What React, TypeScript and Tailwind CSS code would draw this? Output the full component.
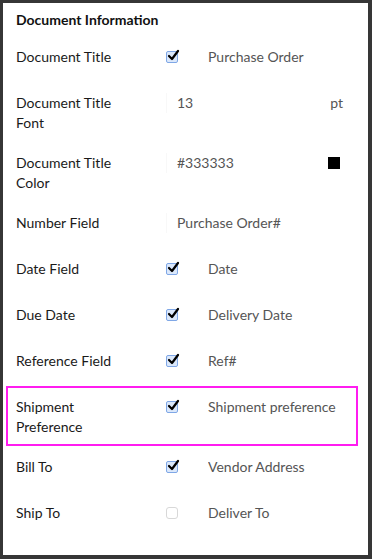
import React from "react"

type Row = {
    label: string[]
    kind: "check" | "text" | "font" | "color"
    checked?: boolean
    value: string
    highlight?: boolean
}

const rows: Row[] = [
    { label: ["Document Title"], kind: "check", checked: true, value: "Purchase Order" },
    { label: ["Document Title", "Font"], kind: "font", value: "13" },
    { label: ["Document Title", "Color"], kind: "color", value: "#333333" },
    { label: ["Number Field"], kind: "text", value: "Purchase Order#" },
    { label: ["Date Field"], kind: "check", checked: true, value: "Date" },
    { label: ["Due Date"], kind: "check", checked: true, value: "Delivery Date" },
    { label: ["Reference Field"], kind: "check", checked: true, value: "Ref#" },
    { label: ["Shipment", "Preference"], kind: "check", checked: true, value: "Shipment preference", highlight: true },
    { label: ["Bill To"], kind: "check", checked: true, value: "Vendor Address" },
    { label: ["Ship To"], kind: "check", checked: false, value: "Deliver To" },
]

function Check({ checked }: { checked?: boolean }) {
    if (!checked) {
        return <span className="block w-[12px] h-[12px] rounded-[3px] border border-[#d8d8d8] bg-white" />
    }
    return (
        <span className="relative block w-[12px] h-[12px] rounded-[2px] border border-[#7fa7e6] bg-[#dbe8fb]">
            <svg className="absolute -top-[3px] left-[0px]" width="13" height="13" viewBox="0 0 13 13">
                <path d="M2 7 L5 10 L11 2" fill="none" stroke="#000" strokeWidth="2.2" strokeLinecap="round" strokeLinejoin="round" />
            </svg>
        </span>
    )
}

export default function App() {
    return (
        <div className="w-[372px] h-[559px] bg-[#363636] pt-[3px] pl-[3px] pr-[4px] pb-[4px]" style={{ fontFamily: "Lato, 'Liberation Sans', sans-serif" }}>
            <div className="w-full h-full bg-white overflow-hidden">
                <div className="h-[33px] pl-[13px] pt-[9px] text-[14px] leading-[16px] font-bold text-[#111]">
                    Document Information
                </div>
                {rows.map((r, i) => (
                    <div
                        key={i}
                        className={`flex items-start ${r.label.length > 1 ? "h-[60px]" : "h-[46px]"} ${r.highlight ? "ml-[3px] w-[352px] border-2 border-[#ff1cf0] pl-[8px] pt-[9px]" : "pl-[13px] pt-[11px]"}`}
                    >
                        <div className="w-[150px] text-[14px] leading-[20px] text-[#1a1a1a]">
                            {r.label.map((l, j) => (
                                <div key={j}>{l}</div>
                            ))}
                        </div>
                        {r.kind === "check" ? (
                            <div className="flex items-start">
                                <div className="w-[42px] pt-[4px]">
                                    <Check checked={r.checked} />
                                </div>
                                <div className="w-[128px] overflow-hidden whitespace-nowrap text-[14px] leading-[20px] text-[#555]">
                                    {r.value}
                                </div>
                            </div>
                        ) : (
                            <div className="flex items-start border-l border-[#f8f8f8] pl-[10px] w-[180px]">
                                <div className="flex-1 text-[14px] leading-[20px] text-[#555]">{r.value}</div>
                                {r.kind === "font" && <div className="pr-[3px] text-[14px] leading-[20px] text-[#555]">pt</div>}
                                {r.kind === "color" && <div className="mr-[6px] mt-[4px] w-[12px] h-[12px] bg-black" />}
                            </div>
                        )}
                    </div>
                ))}
            </div>
        </div>
    )
}
